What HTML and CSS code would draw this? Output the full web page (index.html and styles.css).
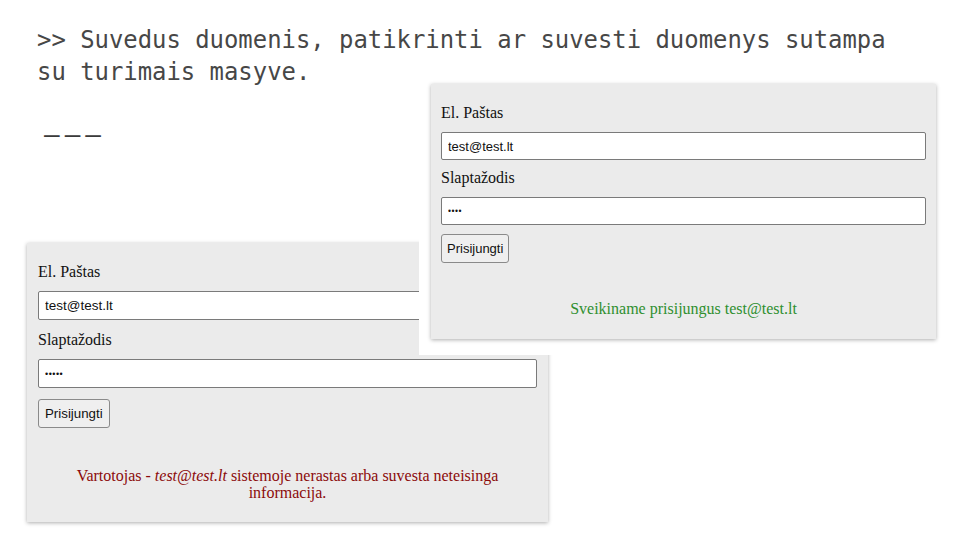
FILE: index.html
```html
<!DOCTYPE html>
<html lang="lt">
<head>
<meta charset="utf-8">
<title>Slide</title>
<link rel="stylesheet" href="styles.css">
</head>
<body>
<div class="slide">
  <div class="note">
    <p class="note-text">&gt;&gt; Suvedus duomenis, patikrinti ar suvesti duomenys sutampa<br>su turimais masyve.</p>
    <p class="rule">———</p>
  </div>

  <div class="shot shot-fail">
    <form class="panel panel-fail">
      <label class="lbl">El. Paštas</label>
      <input class="field" type="text" value="test@test.lt">
      <label class="lbl">Slaptažodis</label>
      <input class="field field-pass" type="password" value="12345">
      <div><button class="btn" type="button">Prisijungti</button></div>
      <p class="msg msg-error">Vartotojas - <em>test@test.lt</em> sistemoje nerastas arba suvesta neteisinga informacija.</p>
    </form>
  </div>

  <div class="shot shot-ok">
    <form class="panel panel-ok">
      <label class="lbl">El. Paštas</label>
      <input class="field" type="text" value="test@test.lt">
      <label class="lbl">Slaptažodis</label>
      <input class="field field-pass" type="password" value="1234">
      <div><button class="btn" type="button">Prisijungti</button></div>
      <p class="msg msg-ok">Sveikiname prisijungus test@test.lt</p>
    </form>
  </div>
</div>
</body>
</html>
```

FILE: styles.css
```css
html, body {
  margin: 0;
  padding: 0;
  background: #ffffff;
}

.slide {
  position: relative;
  width: 960px;
  height: 540px;
  overflow: hidden;
  background: #ffffff;
}

.note {
  padding: 24px 0 0 37px;
  font-family: "DejaVu Sans Mono", "Liberation Mono", monospace;
  font-size: 23.9px;
  line-height: 32px;
  color: #474747;
}

.note-text {
  margin: 0;
}

.rule {
  margin: 30px 0 0 0;
  padding-left: 7px;
  font-size: 26px;
  letter-spacing: 5px;
  color: #3a3a3a;
}

/* screenshots placed on the slide canvas */
.shot {
  position: absolute;
  background: #ffffff;
}

.shot-fail {
  left: 27px;
  top: 243px;
}

.shot-ok {
  left: 419px;
  top: 72px;
  padding: 12px 12px 16px 12px;
}

.panel {
  box-sizing: border-box;
  background: #ebebeb;
  box-shadow: 0 1px 4px rgba(0, 0, 0, 0.32);
  padding: 20px 11px 0 11px;
  display: flex;
  flex-direction: column;
  font-family: "Liberation Serif", "Times New Roman", serif;
  color: #111111;
}

.panel-fail {
  width: 521px;
  height: 279px;
}

.panel-ok {
  width: 505px;
  height: 255px;
  padding-left: 10px;
  padding-right: 10px;
}

.lbl {
  display: block;
  font-size: 16px;
  line-height: 18px;
  margin-bottom: 10px;
}

.field {
  box-sizing: border-box;
  width: 100%;
  height: 29px;
  margin: 0 0 11px 0;
  padding: 0 6px;
  border: 1px solid #7a7a7a;
  border-radius: 2px;
  background: #ffffff;
  font-family: "Liberation Sans", Arial, sans-serif;
  font-size: 13.5px;
  color: #111111;
}

.field-pass {
  font-size: 9px;
  letter-spacing: 0.5px;
}

.panel-ok .field {
  height: 28px;
  margin-bottom: 9px;
  font-size: 13px;
}

.panel-ok .field-pass {
  font-size: 8.5px;
}

.btn {
  box-sizing: border-box;
  height: 29px;
  padding: 0 6px;
  border: 1px solid #8a8a8a;
  border-radius: 3px;
  background: #efefef;
  font-family: "Liberation Sans", Arial, sans-serif;
  font-size: 13.3px;
  color: #111111;
}

.panel-ok .btn {
  height: 29px;
  font-size: 13px;
  padding: 0 5px;
}

.msg {
  margin: 39px 0 0 0;
  text-align: center;
  font-size: 16px;
  line-height: 17px;
}

.msg-error {
  color: #8b0a0a;
}

.msg-ok {
  margin-top: 37px;
  color: #2f8f2f;
}
```
